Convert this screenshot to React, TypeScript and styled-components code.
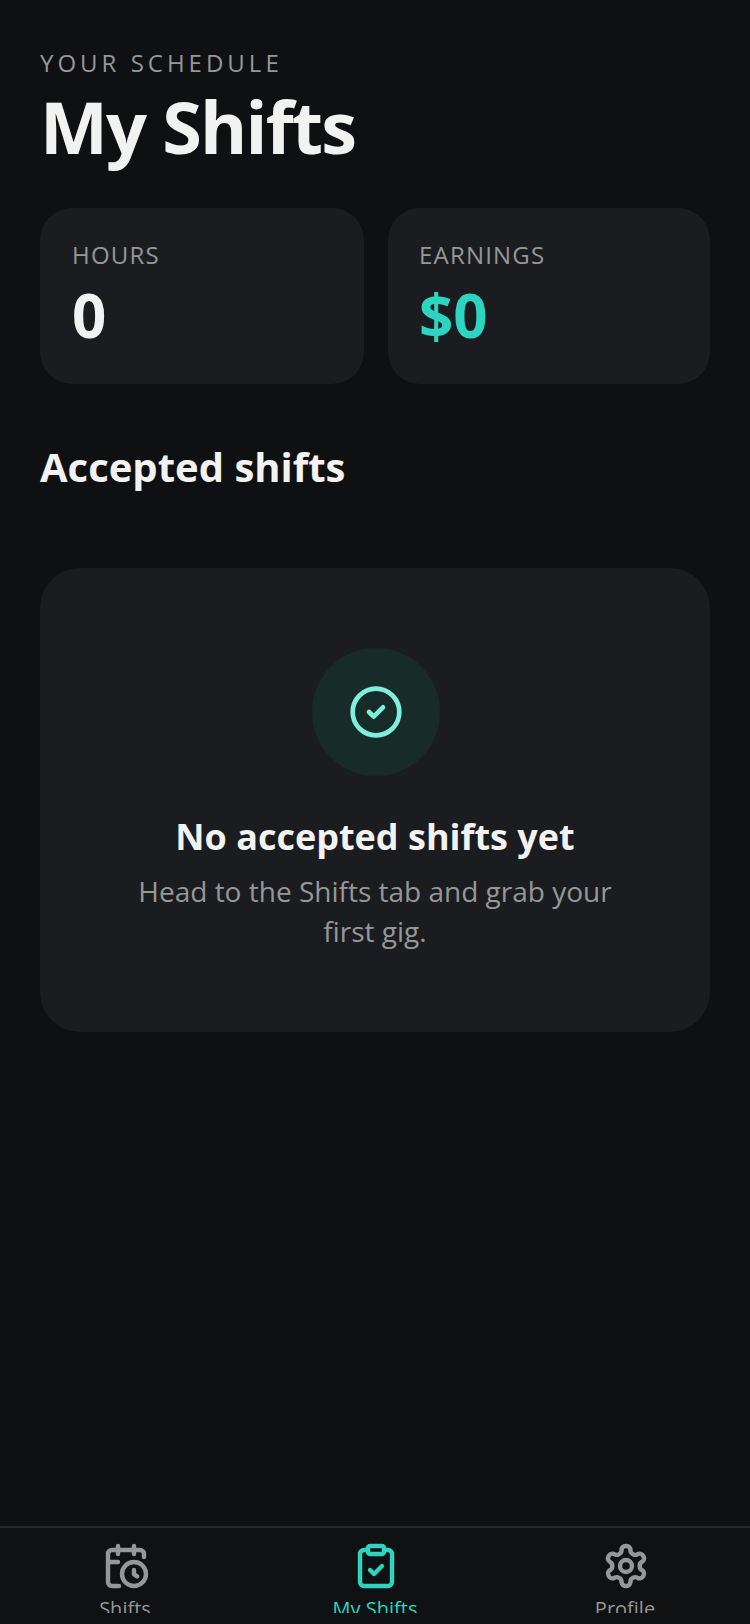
import React from "react";
import styled, { createGlobalStyle } from "styled-components";

const GlobalStyle = createGlobalStyle`
  html, body {
    margin: 0;
    padding: 0;
    background: #0f1012;
  }
  * {
    box-sizing: border-box;
  }
`;

const Screen = styled.div`
  width: 750px;
  height: 1624px;
  display: flex;
  flex-direction: column;
  background: #0f1012;
  color: #f2f2f0;
  font-family: "Open Sans", "Noto Sans", sans-serif;
  overflow: hidden;
`;

const Content = styled.main`
  flex: 1;
  padding: 47px 40px 0;
`;

const Eyebrow = styled.div`
  font-size: 24px;
  line-height: 32px;
  letter-spacing: 4px;
  color: #969797;
`;

const Title = styled.h1`
  margin: 7px 0 0;
  font-size: 72px;
  line-height: 80px;
  font-weight: 700;
  letter-spacing: -1.8px;
  color: #f2f2f0;
`;

const Stats = styled.div`
  display: grid;
  grid-template-columns: 324px 322px;
  gap: 24px;
  margin-top: 42px;
`;

const StatCard = styled.div`
  height: 176px;
  padding: 31px 31px 0 32px;
  border-radius: 32px;
  background: #1b1c20;

  &:nth-child(2) {
    padding-left: 31px;
  }
`;

const StatLabel = styled.div`
  font-size: 24px;
  line-height: 32px;
  letter-spacing: 1.2px;
  color: #969797;
`;

const StatValue = styled.div<{ $accent?: boolean }>`
  margin-top: 12px;
  font-size: 60px;
  line-height: 64px;
  font-weight: 700;
  color: ${(props) => (props.$accent ? "#2dd4bf" : "#f2f2f0")};
`;

const SectionTitle = styled.h2`
  margin: 55px 0 0;
  font-size: 40px;
  line-height: 56px;
  font-weight: 700;
`;

const EmptyCard = styled.section`
  height: 464px;
  margin-top: 73px;
  padding: 80px 80px 0;
  border-radius: 40px;
  background: #1b1c20;
  display: flex;
  flex-direction: column;
  align-items: center;
  text-align: center;
`;

const IconCircle = styled.div`
  width: 128px;
  height: 128px;
  margin-left: 2px;
  border-radius: 50%;
  background: #172b28;
  display: flex;
  align-items: center;
  justify-content: center;
`;

const EmptyTitle = styled.h3`
  margin: 37px 0 0;
  font-size: 36px;
  line-height: 48px;
  font-weight: 700;
`;

const EmptyText = styled.p`
  margin: 10px 0 0;
  font-size: 28px;
  line-height: 40px;
  color: #969797;
`;

const TabBar = styled.nav`
  height: 98px;
  flex: none;
  display: grid;
  grid-template-columns: repeat(3, 1fr);
  border-top: 2px solid #26272a;
  background: #0f1113;
`;

const Tab = styled.div<{ $active?: boolean }>`
  height: 85px;
  padding-top: 14px;
  display: flex;
  flex-direction: column;
  align-items: center;
  overflow: hidden;
  color: ${(props) => (props.$active ? "#2dd4bf" : "#969797")};

  svg {
    flex: none;
    margin-left: 2px;
  }
`;

const TabLabel = styled.span`
  flex: none;
  margin-top: 5px;
  font-size: 20px;
  line-height: 28px;
`;

function ShiftsIcon() {
  return (
    <svg width="48" height="48" viewBox="0 0 24 24" fill="none" stroke="currentColor" strokeWidth="2.2" strokeLinecap="round" strokeLinejoin="round">
      <path d="M16 2v4" />
      <path d="M8 2v4" />
      <path d="M21 7.5V6a2 2 0 0 0-2-2H5a2 2 0 0 0-2 2v14a2 2 0 0 0 2 2h3.5" />
      <path d="M3 10h5" />
      <circle cx="16" cy="16" r="6" />
      <path d="M16 14v2.2l1.6 1" />
    </svg>
  );
}

function MyShiftsIcon() {
  return (
    <svg width="48" height="48" viewBox="0 0 24 24" fill="none" stroke="currentColor" strokeWidth="2.2" strokeLinecap="round" strokeLinejoin="round">
      <rect x="8" y="2" width="8" height="4" rx="1" />
      <path d="M16 4h2a2 2 0 0 1 2 2v14a2 2 0 0 1-2 2H6a2 2 0 0 1-2-2V6a2 2 0 0 1 2-2h2" />
      <path d="m9 14 2 2 4-4" />
    </svg>
  );
}

function ProfileIcon() {
  return (
    <svg width="48" height="48" viewBox="0 0 24 24" fill="none" stroke="currentColor" strokeWidth="2.2" strokeLinecap="round" strokeLinejoin="round">
      <path d="M12.22 2h-.44a2 2 0 0 0-2 2v.18a2 2 0 0 1-1 1.73l-.43.25a2 2 0 0 1-2 0l-.15-.08a2 2 0 0 0-2.73.73l-.22.38a2 2 0 0 0 .73 2.73l.15.1a2 2 0 0 1 1 1.72v.51a2 2 0 0 1-1 1.74l-.15.09a2 2 0 0 0-.73 2.73l.22.38a2 2 0 0 0 2.73.73l.15-.08a2 2 0 0 1 2 0l.43.25a2 2 0 0 1 1 1.73V20a2 2 0 0 0 2 2h.44a2 2 0 0 0 2-2v-.18a2 2 0 0 1 1-1.73l.43-.25a2 2 0 0 1 2 0l.15.08a2 2 0 0 0 2.73-.73l.22-.39a2 2 0 0 0-.73-2.73l-.15-.08a2 2 0 0 1-1-1.74v-.5a2 2 0 0 1 1-1.74l.15-.09a2 2 0 0 0 .73-2.73l-.22-.38a2 2 0 0 0-2.73-.73l-.15.08a2 2 0 0 1-2 0l-.43-.25a2 2 0 0 1-1-1.73V4a2 2 0 0 0-2-2z" />
      <circle cx="12" cy="12" r="3" />
    </svg>
  );
}

function CheckCircleIcon() {
  return (
    <svg width="56" height="56" viewBox="0 0 24 24" fill="none" stroke="#7ff0dd" strokeWidth="2" strokeLinecap="round" strokeLinejoin="round">
      <circle cx="12" cy="12" r="10" />
      <path d="m9 12 2 2 4-4" />
    </svg>
  );
}

export default function App() {
  return (
    <Screen>
      <GlobalStyle />
      <Content>
        <Eyebrow>YOUR SCHEDULE</Eyebrow>
        <Title>My Shifts</Title>
        <Stats>
          <StatCard>
            <StatLabel>HOURS</StatLabel>
            <StatValue>0</StatValue>
          </StatCard>
          <StatCard>
            <StatLabel>EARNINGS</StatLabel>
            <StatValue $accent>$0</StatValue>
          </StatCard>
        </Stats>
        <SectionTitle>Accepted shifts</SectionTitle>
        <EmptyCard>
          <IconCircle>
            <CheckCircleIcon />
          </IconCircle>
          <EmptyTitle>No accepted shifts yet</EmptyTitle>
          <EmptyText>Head to the Shifts tab and grab your first gig.</EmptyText>
        </EmptyCard>
      </Content>
      <TabBar>
        <Tab>
          <ShiftsIcon />
          <TabLabel>Shifts</TabLabel>
        </Tab>
        <Tab $active>
          <MyShiftsIcon />
          <TabLabel>My Shifts</TabLabel>
        </Tab>
        <Tab>
          <ProfileIcon />
          <TabLabel>Profile</TabLabel>
        </Tab>
      </TabBar>
    </Screen>
  );
}
